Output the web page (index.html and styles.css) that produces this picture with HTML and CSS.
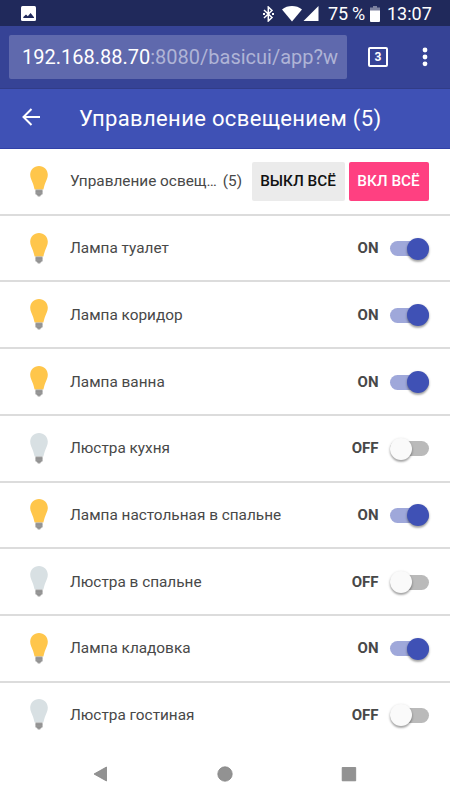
FILE: index.html
```html
<!DOCTYPE html>
<html lang="ru">
<head>
<meta charset="utf-8">
<title>Управление освещением</title>
<link rel="stylesheet" href="styles.css">
</head>
<body>
<svg class="defs" aria-hidden="true">
  <symbol id="bulb" viewBox="0 0 18 31">
    <path class="glass" d="M9 0C4 0 .2 3.800.2 8.700c0 3.200 1.500 5.500 2.500 8.300 1 2.600 1.400 4.300 1.900 6.500h8.800c.5-2.200.9-3.900 1.900-6.500 1-2.800 2.500-5.100 2.500-8.300C17.800 3.800 14 0 9 0z"/>
    <path fill="#a0a0a0" d="M5.500 23.500h7v5h-1.500l-.8 1.900H7.800L7 28.500H5.500z"/>
    <path stroke="#808080" stroke-width=".6" d="M5.500 25.200h7M5.500 27h7M6.400 28.700h5.200"/>
  </symbol>
</svg>
<header class="status">
  <svg class="photo" viewBox="0 0 15 15"><rect width="15" height="15" rx="1.500" fill="#fff"/><path fill="#20295b" d="M2.300 12V11L5 8.500 6.800 10.300 9.600 7 13 11.300V12z"/></svg>
  <svg class="bt" viewBox="0 0 11 16"><path d="M1 4l8 7.500L5.300 15V1L9 4.500 1 12" fill="none" stroke="#fff" stroke-width="1.500"/><path fill="#fff" d="M0 7h2v2H0zM9 7h2v2H9z"/></svg>
  <svg class="wifi" viewBox="0 0 20 16"><path fill="#fff" d="M0 3.500C5.500-1.100 14.500-1.100 20 3.500L10 15.500z"/></svg>
  <svg class="cell" viewBox="0 0 16 16"><path fill="#fff" d="M16 0v16H0z"/></svg>
  <span class="percent">75 %</span>
  <svg class="battery" viewBox="0 0 10 16"><path fill="#7c819f" d="M3 0h4v1.500h3V5H0V1.500h3z"/><path fill="#fff" d="M0 4.500h10V15a1 1 0 0 1-1 1H1a1 1 0 0 1-1-1z"/></svg>
  <span class="clock">13:07</span>
</header>
<div class="browser">
  <div class="address"><span class="host">192.168.88.70</span>:8080/basicui/app?w</div>
  <div class="tabs">3</div>
  <svg class="more" viewBox="0 0 6 20"><g fill="#fff"><circle cx="3" cy="3" r="2.400"/><circle cx="3" cy="10" r="2.400"/><circle cx="3" cy="16.800" r="2.400"/></g></svg>
</div>
<div class="appbar">
  <svg class="back" viewBox="0 0 18 18"><path d="M18 9H1.500M9.500 1 1.500 9l8 8" fill="none" stroke="#fff" stroke-width="2"/></svg>
  <h1>Управление освещением (5)</h1>
</div>
<main>
  <div class="row"><svg class="bulb on"><use href="#bulb"/></svg><span class="label group"><span>Управление освещ…</span><span class="count">(5)</span></span><button class="btn">ВЫКЛ ВСЁ</button><button class="btn accent">ВКЛ ВСЁ</button></div>
  <div class="row"><svg class="bulb on"><use href="#bulb"/></svg><span class="label">Лампа туалет</span><b class="state">ON</b><i class="switch on"></i></div>
  <div class="row"><svg class="bulb on"><use href="#bulb"/></svg><span class="label">Лампа коридор</span><b class="state">ON</b><i class="switch on"></i></div>
  <div class="row"><svg class="bulb on"><use href="#bulb"/></svg><span class="label">Лампа ванна</span><b class="state">ON</b><i class="switch on"></i></div>
  <div class="row"><svg class="bulb"><use href="#bulb"/></svg><span class="label">Люстра кухня</span><b class="state">OFF</b><i class="switch"></i></div>
  <div class="row"><svg class="bulb on"><use href="#bulb"/></svg><span class="label">Лампа настольная в спальне</span><b class="state">ON</b><i class="switch on"></i></div>
  <div class="row"><svg class="bulb"><use href="#bulb"/></svg><span class="label">Люстра в спальне</span><b class="state">OFF</b><i class="switch"></i></div>
  <div class="row"><svg class="bulb on"><use href="#bulb"/></svg><span class="label">Лампа кладовка</span><b class="state">ON</b><i class="switch on"></i></div>
  <div class="row"><svg class="bulb"><use href="#bulb"/></svg><span class="label">Люстра гостиная</span><b class="state">OFF</b><i class="switch"></i></div>
</main>
<nav class="nav">
  <svg viewBox="0 0 16 16"><path d="M14.500 1v14L2 8z"/></svg>
  <svg viewBox="0 0 16 16"><circle cx="8" cy="8" r="7.200"/></svg>
  <svg viewBox="0 0 16 16"><path d="M1.200 1.500h13.500v13.300H1.200z"/></svg>
</nav>
</body>
</html>
```

FILE: styles.css
```css
* { box-sizing: border-box; }
body {
  margin: 0;
  width: 450px;
  height: 800px;
  overflow: hidden;
  display: flex;
  flex-direction: column;
  background: #fff;
  font-family: Roboto, sans-serif;
  color: #484848;
}
svg { display: block; flex: none; }
.defs { position: absolute; width: 0; height: 0; }

.status {
  height: 26px;
  flex: none;
  display: flex;
  align-items: center;
  padding: 1px 18px 0 21px;
  background: #20295b;
  color: #fff;
  font-size: 18px;
  line-height: 26px;
}
.photo { width: 15px; height: 15px; margin-right: auto; }
.bt { width: 11px; height: 16px; }
.wifi { width: 20px; height: 16px; margin-left: 8px; }
.cell { width: 16px; height: 15px; margin-left: 1px; }
.percent { width: 37px; margin-left: 9px; white-space: nowrap; letter-spacing: -0.2px; }
.battery { width: 10px; height: 16px; margin-left: 5px; }
.clock { width: 45px; margin-left: 7px; }

.browser {
  height: 63px;
  flex: none;
  display: flex;
  align-items: center;
  padding: 0 22px 0 9px;
  background: #364396;
  border-bottom: 1px solid #313c87;
}
.address {
  width: 338px;
  height: 44px;
  margin-bottom: 1px;
  padding-left: 13px;
  border-radius: 2px;
  background: #5f69ad;
  color: #afb4d6;
  font-size: 20px;
  line-height: 44px;
  white-space: nowrap;
}
.host { color: #fff; }
.tabs {
  width: 20px;
  height: 20px;
  margin-left: 21px;
  border: 2px solid #fff;
  border-radius: 2px;
  color: #fff;
  font-size: 12px;
  font-weight: 700;
  line-height: 16px;
  text-align: center;
}
.more { width: 6px; height: 20px; margin-left: auto; }

.appbar {
  height: 59.500px;
  flex: none;
  display: flex;
  align-items: center;
  padding: 0 22px 2px;
  background: #3f51b5;
  border-bottom: 1px solid #3040a8;
  color: #fff;
}
.back { width: 18px; height: 18px; }
h1 {
  margin: 3px 0 0 39px;
  font-size: 22px;
  font-weight: 400;
  line-height: 30px;
  letter-spacing: 0.34px;
  white-space: nowrap;
}

main { padding-top: 0.6px; }
.row {
  height: 66.7px;
  display: flex;
  align-items: center;
  padding: 0 21.500px 0 30.300px;
  border-bottom: 2px solid #dcdcdc;
}
.row:last-child { border-bottom: 0; padding-bottom: 2px; }
.bulb { width: 18px; height: 31px; margin-right: 21.700px; fill: #d8e0e3; }
.bulb.on { fill: #ffc64b; }
.label {
  flex: 1;
  font-size: 15.350px;
  line-height: 20px;
  letter-spacing: 0;
  white-space: nowrap;
}
.group { display: flex; }
.count { margin-left: 6px; }
.btn {
  width: 93px;
  height: 39px;
  padding: 0;
  border: 0;
  border-radius: 2px;
  background: #ebebeb;
  color: #111;
  font: 500 15.300px/38px Roboto, sans-serif;
  white-space: nowrap;
}
.accent { width: 80px; margin-left: 4px; background: #ff4081; color: #fff; }
.state { margin-right: 11px; font-size: 15px; font-weight: 700; }
.switch {
  width: 39px;
  height: 15px;
  display: flex;
  align-items: center;
  border-radius: 8px;
  background: #bababa;
  margin-top: 1px;
}
.switch::before {
  content: "";
  width: 22px;
  height: 22px;
  flex: none;
  border-radius: 50%;
  background: #fafafa;
  box-shadow: 0 2px 2px rgba(0, 0, 0, .25), 0 1px 3px rgba(0, 0, 0, .2);
}
.switch.on { justify-content: flex-end; background: #9fa8da; }
.switch.on::before { background: #3f51b5; }

.nav {
  margin-top: 17px;
  display: flex;
  justify-content: space-between;
  padding: 0 93px 0 92px;
}
.nav svg { width: 16px; height: 16px; fill: #929292; stroke: #858585; stroke-width: .8; }
```
